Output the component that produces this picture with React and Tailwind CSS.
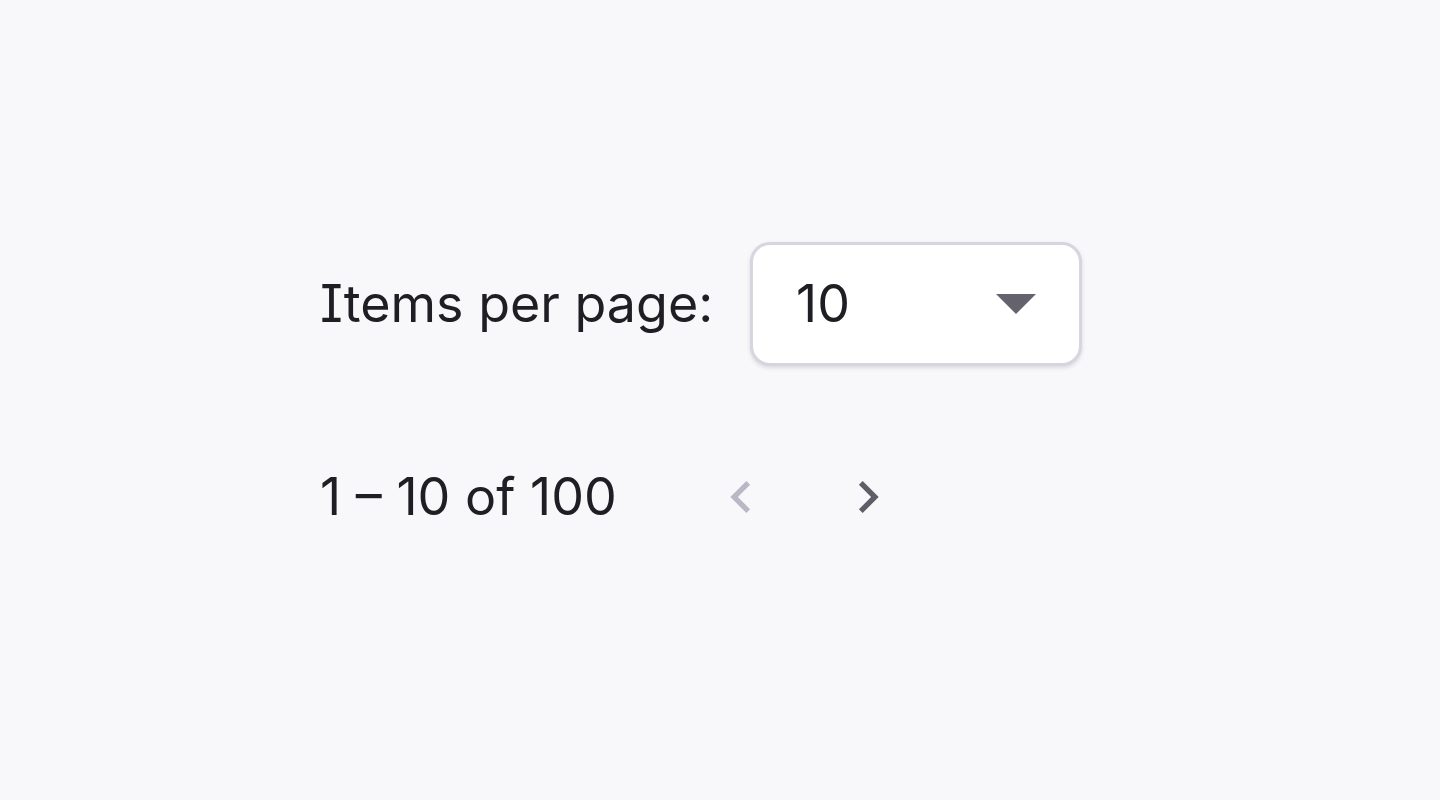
import React from "react";

export default function App() {
  return (
    <div className="w-[1440px] h-[800px] bg-[#f8f8fa] flex flex-col pl-[320px] pt-[242px] text-[#1e1e24] [font-family:Inter,'Liberation_Sans',sans-serif] [font-feature-settings:'cv08']">
      <div className="flex items-center h-[124px]">
        <span className="w-[394px] text-[52px] leading-none tracking-[0px]">Items per page:</span>
        <div className="ml-[36px] w-[332px] h-[124px] bg-white rounded-[20px] border-[3px] border-[#d6d5e0] shadow-[0_2px_4px_rgba(0,0,0,0.12)] flex items-center justify-between pl-[43px] pr-[43px]">
          <span className="text-[52px] leading-none">10</span>
          <svg width="40" height="20" viewBox="0 0 40 20">
            <polygon points="0,0 40,0 20,20" fill="#64636d" />
          </svg>
        </div>
      </div>
      <div className="flex items-center h-[110px] mt-[76px]">
        <span className="w-[389px] text-[52px] leading-none">1 – 10 of 100</span>
        <div className="flex items-center gap-[63px]">
          <svg width="64" height="64" viewBox="0 0 24 24" className="text-[#b9b8c5]">
            <path d="M15.41 7.41 14 6l-6 6 6 6 1.41-1.41L10.83 12z" fill="currentColor" />
          </svg>
          <svg width="64" height="64" viewBox="0 0 24 24" className="text-[#5f5e67]">
            <path d="M10 6 8.59 7.41 13.17 12l-4.58 4.59L10 18l6-6z" fill="currentColor" />
          </svg>
        </div>
      </div>
    </div>
  );
}
